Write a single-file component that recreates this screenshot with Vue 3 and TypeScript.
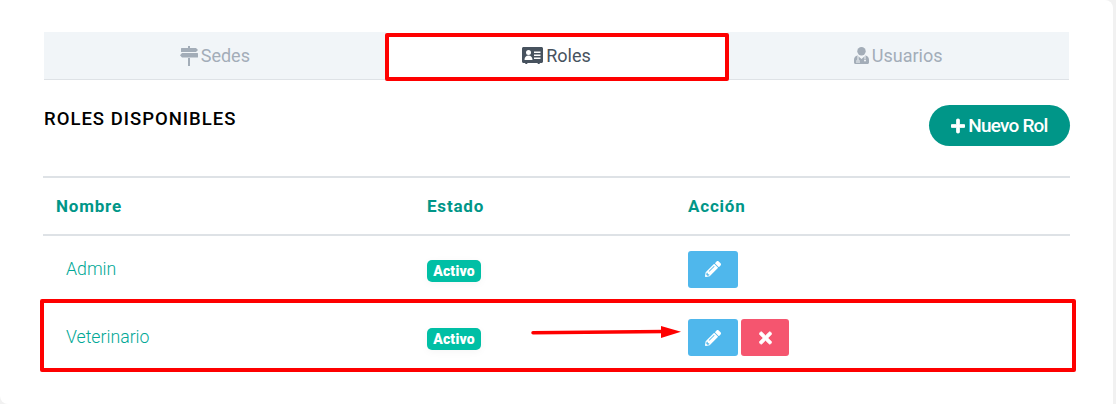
<template>
  <div class="page">
    <div class="card">
      <div class="tabs">
        <div v-for="tab in tabs" :key="tab.name" class="tab" :class="{ active: tab.active }">
          <svg v-if="tab.name === 'Sedes'" class="tab-icon" width="18" height="20" viewBox="0 0 18 20">
            <path fill="currentColor" d="M8 0h2v2h6l2 2-2 2H1V2.600C1 2.300 1.300 2 1.600 2H8zM8 7h9.400c.3 0 .6.3.6.6V11c0 .3-.3.6-.6.6H2L0 9.300 2 7h6zM8 12h2v8H8z" />
          </svg>
          <svg v-else-if="tab.name === 'Roles'" class="tab-icon" width="21" height="17" viewBox="0 0 21 17">
            <path fill="currentColor" fill-rule="evenodd" d="M1.500 0h18c.8 0 1.500.7 1.500 1.500v13c0 .8-.7 1.500-1.500 1.500h-1.800v1h-2v-1H5.300v1h-2v-1H1.500C.7 16 0 15.300 0 14.500v-13C0 .7.7 0 1.500 0z" />
            <circle cx="6.500" cy="5.500" r="2.500" fill="#fff" />
            <path fill="#fff" d="M2.500 13c0-2.800 1.600-4.500 4-4.500s4 1.700 4 4.500zM12 4.500h6.500v1.400H12zM12 7.500h6.500v1.400H12zM12 10.500h6.500v1.400H12z" />
          </svg>
          <svg v-else class="tab-icon" width="15" height="17" viewBox="0 0 15 17">
            <circle cx="7.500" cy="4.200" r="4.200" fill="currentColor" />
            <path fill="currentColor" d="M3.500 8.500C1.300 9 0 10.600 0 12.800v2.700C0 16.300.7 17 1.500 17h12c.8 0 1.500-.7 1.500-1.500v-2.700c0-2.200-1.300-3.800-3.500-4.300L7.500 12z" />
            <path fill="none" stroke="#f1f5f8" stroke-width="1" d="M4 9v3.500M3 16v-2.500C3 12.500 5 12.500 5 13.500V16M11 9v3" />
            <circle cx="11" cy="13.500" r="1" fill="#f1f5f8" />
          </svg>
          <span>{{ tab.name }}</span>
        </div>
      </div>

      <div class="head">
        <h2 class="title">ROLES DISPONIBLES</h2>
        <button class="new-btn">
          <svg width="14" height="16" viewBox="0 0 448 512">
            <path fill="currentColor" stroke="currentColor" stroke-width="24" d="M416 208H272V64c0-17.670-14.330-32-32-32h-32c-17.670 0-32 14.330-32 32v144H32c-17.670 0-32 14.330-32 32v32c0 17.670 14.330 32 32 32h144v144c0 17.670 14.330 32 32 32h32c17.670 0 32-14.330 32-32V304h144c17.670 0 32-14.330 32-32v-32c0-17.670-14.330-32-32-32z" />
          </svg>
          Nuevo Rol
        </button>
      </div>

      <table class="roles">
        <colgroup>
          <col style="width: 371px" />
          <col style="width: 261px" />
          <col />
        </colgroup>
        <thead>
          <tr>
            <th>Nombre</th>
            <th>Estado</th>
            <th>Acción</th>
          </tr>
        </thead>
        <tbody>
          <tr v-for="role in roles" :key="role.name" :class="{ tall: role.canDelete }">
            <td><span class="role-name">{{ role.name }}</span></td>
            <td><span class="badge">Activo</span></td>
            <td>
              <div class="actions">
                <button class="act edit">
                  <svg width="16" height="16" viewBox="0 0 512 512">
                    <path fill="currentColor" d="M497.900 142.100l-46.100 46.100c-4.700 4.700-12.300 4.700-17 0l-111-111c-4.700-4.700-4.700-12.300 0-17l46.100-46.100c18.700-18.700 49.100-18.700 67.900 0l60.100 60.100c18.800 18.700 18.800 49.100 0 67.900zM284.200 99.800L21.600 362.400.4 483.900c-2.900 16.400 11.400 30.600 27.800 27.800l121.500-21.300 262.600-262.600c4.700-4.700 4.700-12.300 0-17l-111-111c-4.800-4.700-12.400-4.700-17.100 0zM124.100 339.900c-5.500-5.500-5.500-14.300 0-19.800l154-154c5.500-5.500 14.300-5.500 19.800 0s5.500 14.300 0 19.800l-154 154c-5.500 5.500-14.300 5.500-19.800 0zM88 424h48v36.300l-64.500 11.300-31.100-31.100L51.700 376H88v48z" />
                  </svg>
                </button>
                <button v-if="role.canDelete" class="act del">
                  <svg width="13" height="18" viewBox="0 0 352 512">
                    <path fill="currentColor" stroke="currentColor" stroke-width="20" d="M242.720 256l100.070-100.070c12.280-12.280 12.280-32.190 0-44.480l-22.240-22.240c-12.280-12.280-32.190-12.280-44.480 0L176 189.280 75.930 89.210c-12.280-12.280-32.190-12.280-44.480 0L9.210 111.450c-12.280 12.280-12.280 32.190 0 44.480L109.280 256 9.210 356.070c-12.280 12.280-12.280 32.190 0 44.480l22.240 22.240c12.280 12.280 32.200 12.280 44.480 0L176 322.720l100.070 100.070c12.280 12.280 32.200 12.280 44.480 0l22.240-22.240c12.280-12.280 12.280-32.190 0-44.480L242.720 256z" />
                  </svg>
                </button>
              </div>
            </td>
          </tr>
        </tbody>
      </table>

      <!-- red annotations drawn over the screenshot -->
      <div class="mark mark-tab"></div>
      <div class="mark mark-row"></div>
      <svg class="arrow" width="160" height="24" viewBox="0 0 160 24">
        <path d="M3 12.800 L135 11.500" stroke="#fe0000" stroke-width="3.500" stroke-linecap="round" fill="none" />
        <path d="M131 6 L151 11.700 L131 18 Z" fill="#fe0000" />
      </svg>
    </div>
  </div>
</template>

<script setup lang="ts">
interface Tab {
  name: string
  active?: boolean
}

interface Role {
  name: string
  canDelete: boolean
}

const tabs: Tab[] = [{ name: 'Sedes' }, { name: 'Roles', active: true }, { name: 'Usuarios' }]

const roles: Role[] = [
  { name: 'Admin', canDelete: false },
  { name: 'Veterinario', canDelete: true },
]
</script>

<style>
html,
body {
  margin: 0;
  background: #f1f1f1;
}
</style>

<style scoped>
.page {
  width: 1116px;
  height: 404px;
  overflow: hidden;
  font-family: Roboto, "Liberation Sans", sans-serif;
}
.card {
  position: relative;
  box-sizing: border-box;
  width: 1113px;
  height: 404px;
  padding: 32px 43px 0 43px;
  background: #fff;
  border-radius: 0 8px 0 8px;
}
.tabs {
  display: flex;
  margin: 0 1px;
  height: 48px;
  box-sizing: border-box;
  background: #f1f5f8;
  border-bottom: 1px solid #dee2e6;
}
.tab {
  flex: 1;
  display: flex;
  align-items: center;
  justify-content: center;
  gap: 3px;
  font-size: 18px;
  color: #a3adb8;
}
.tab.active {
  background: #fff;
  color: #47525e;
}
.tab-icon {
  flex: none;
}
.head {
  display: flex;
  justify-content: space-between;
  align-items: flex-start;
  padding-left: 1px;
  margin-top: 25px;
  height: 71px;
}
.title {
  margin: 4px 0 0;
  font-size: 18.500px;
  font-weight: 500;
  line-height: 20px;
  letter-spacing: 1px;
  color: #000;
}
.new-btn {
  display: flex;
  align-items: center;
  justify-content: center;
  gap: 3px;
  width: 141px;
  height: 41px;
  padding: 0;
  border: 0;
  border-radius: 21px;
  background: #009688;
  color: #fff;
  font-family: inherit;
  font-size: 19px;
  font-weight: 500;
  letter-spacing: -0.8px;
}
.roles {
  width: 100%;
  table-layout: fixed;
  border-collapse: collapse;
}
th {
  height: 56px;
  padding: 0 13px;
  text-align: left;
  font-size: 17px;
  font-weight: 700;
  letter-spacing: 0.8px;
  color: #009688;
  border-top: 2px solid #dee2e6;
  border-bottom: 2px solid #dee2e6;
}
td {
  height: 66px;
  padding: 0 13px;
  vertical-align: middle;
}
.tall td {
  height: 71px;
}
.role-name {
  display: block;
  padding-left: 10px;
  padding-bottom: 1px;
  font-size: 17.700px;
  font-weight: 300;
  color: #00a896;
}
.badge {
  display: inline-block;
  box-sizing: border-box;
  width: 54px;
  height: 22px;
  margin-top: 3px;
  line-height: 22px;
  text-align: center;
  border-radius: 5px;
  background: #00bfa5;
  box-shadow: 0 2px 8px rgba(0, 0, 0, 0.04);
  color: #fff;
  font-size: 14px;
  font-weight: 900;
  letter-spacing: 0.2px;
}
.actions {
  display: flex;
  gap: 3px;
}
.act {
  display: flex;
  align-items: center;
  justify-content: center;
  height: 37px;
  padding: 0;
  border: 0;
  border-radius: 3px;
  color: #fff;
}
.edit {
  width: 50px;
  background: #4fb7ec;
}
.del {
  width: 48px;
  background: #f5556f;
}
.mark {
  position: absolute;
  box-sizing: border-box;
  border: 4px solid #fe0000;
  border-radius: 2px;
  pointer-events: none;
}
.mark-tab {
  left: 385px;
  top: 33px;
  width: 344px;
  height: 48px;
}
.mark-row {
  left: 40px;
  top: 299px;
  width: 1036px;
  height: 73px;
}
.arrow {
  position: absolute;
  left: 530px;
  top: 320px;
}
</style>
